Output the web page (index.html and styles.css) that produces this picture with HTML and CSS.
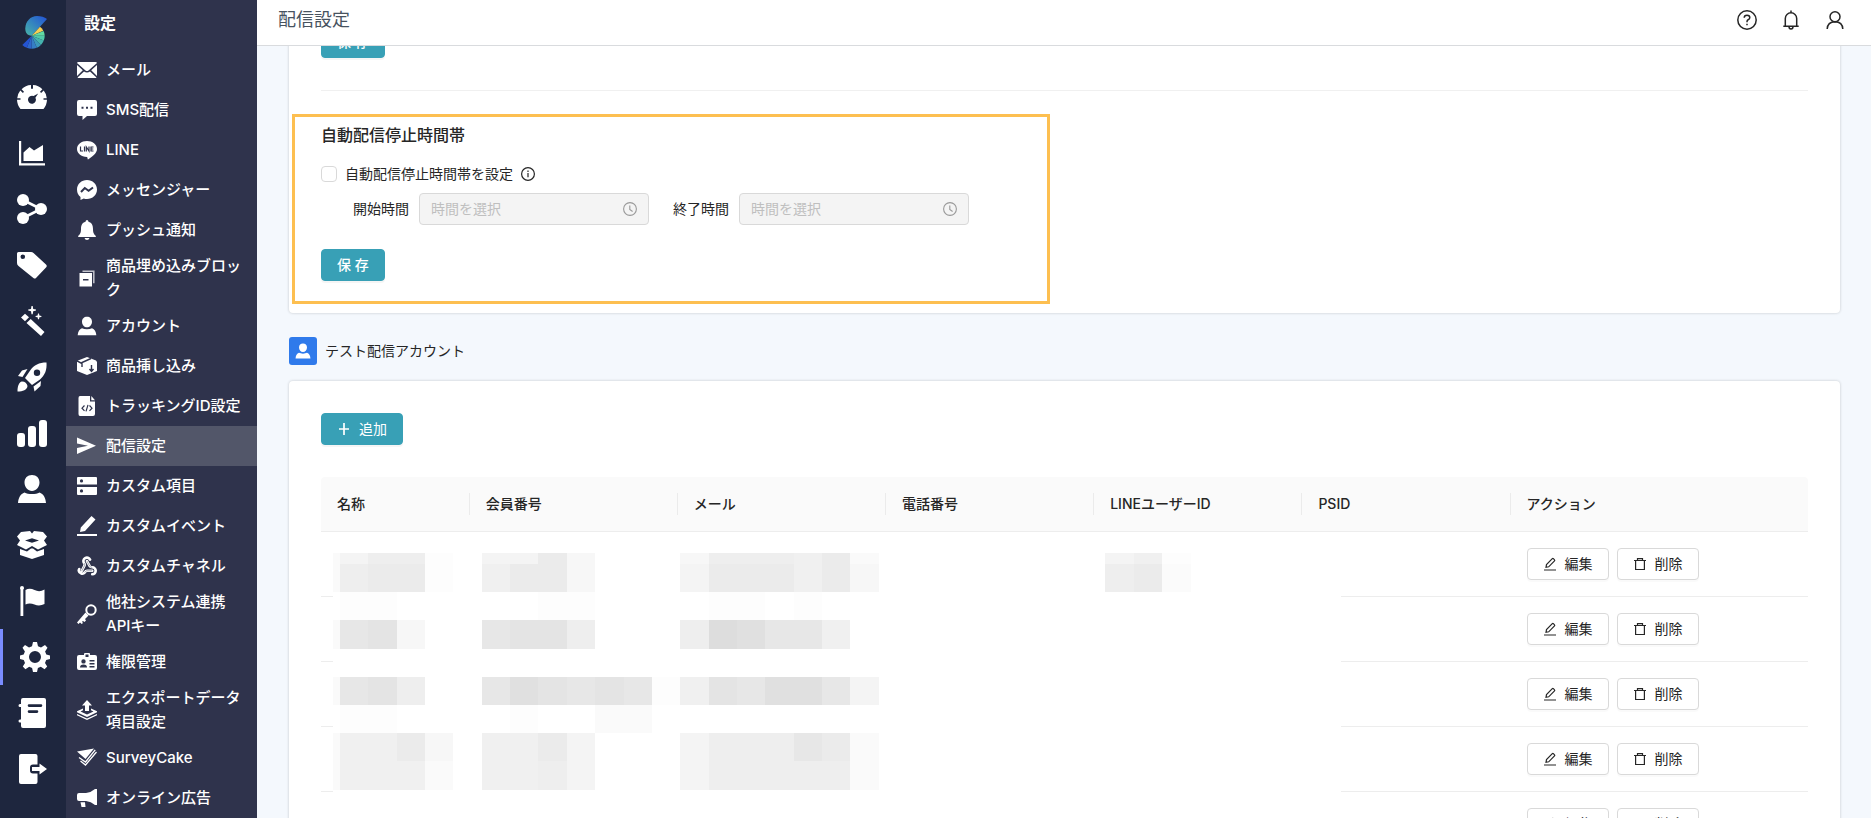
FILE: index.html
```html
<!DOCTYPE html>
<html lang="ja">
<head>
    <meta charset="UTF-8">
    <meta name="viewport" content="width=device-width, initial-scale=1.0">
    <title>配信設定</title>
    <link rel="stylesheet" href="styles.css">
</head>
<body>

    <svg class="sprite" aria-hidden="true">
        <symbol id="i-user" viewBox="0 0 30 30"><path d="M15 1c4.500 0 7.500 3 7.500 7.500S19 17 15 17 7.500 13 7.500 8.500 10.500 1 15 1zM1 29c.5-5.500 2.500-9 6.500-10.500 2 1 4.500 1.500 7.500 1.500s5.500-.5 7.500-1.500C26.500 20 28.500 23.500 29 29z"/></symbol>
        <symbol id="i-edit" viewBox="0 0 14 14"><path d="M1 13h12M3 10.300l.5-2.800L9.300 1.700a.8.8 0 0 1 1.100 0l1.100 1.100a.8.8 0 0 1 0 1.100L5.700 9.800z" fill="none" stroke="currentColor" stroke-width="1.200"/></symbol>
        <symbol id="i-trash" viewBox="0 0 14 14"><path d="M1 3.500h12M4.500 3.300V1.600h5v1.700M2.600 3.500v9h8.800v-9" fill="none" stroke="currentColor" stroke-width="1.200"/></symbol>
        <symbol id="i-clock" viewBox="0 0 14 14"><path d="M7 .6a6.400 6.400 0 1 1 0 12.800A6.400 6.400 0 0 1 7 .6zM6.800 3.500v4l2.800 2" fill="none" stroke="currentColor" stroke-width="1.100"/></symbol>
    </svg>

    <nav class="rail" aria-label="メイン">
        <a class="logo" href="#" aria-label="ホーム">
            <svg viewBox="0 0 26 34">
                <defs>
                    <linearGradient id="swoop" x1="1" y1="0" x2="0" y2="1">
                        <stop offset="0" stop-color="#2350d6"/>
                        <stop offset=".3" stop-color="#2c6fc9"/>
                        <stop offset="1" stop-color="#48b5a8"/>
                    </linearGradient>
                </defs>
                <path fill="url(#swoop)" d="M25 3 9.700 19.700C5 19.500 3.300 16.500 3.300 12.500 3.300 5.500 8.500 0 15 0c4 0 7.500 1 10 3z"/>
                <path fill="#f5cf54" d="M9.700 19.700 18 10.700q2.200 1.700 3.300 4z"/>
                <path fill="#62dba4" d="m9.700 19.700 11.800-4.700q1.300 2.200 1.200 4.700z"/>
                <path fill="#52cba9" d="M9.700 19.700h13q0 2.600-.9 4.900z"/>
                <path fill="#45b3ae" d="m9.700 19.700 12.100 4.900q-1 2.400-2.900 4.300z"/>
                <path fill="#3b97ba" d="m9.700 19.700 9.200 9.200q-1.900 1.900-4.100 2.800z"/>
                <path fill="#357ec4" d="m9.700 19.700 5.100 12q-2.500 1-5.100 1z"/>
                <path fill="#2e67cb" d="M9.700 19.700v13q-2.600 0-4.900-.9z"/>
                <path fill="#2454d2" d="M9.700 19.700 4.800 31.800Q2.200 30.800.3 28.900z"/>
            </svg>
        </a>
        <a class="rail-item" href="#" aria-label="ダッシュボード"><svg viewBox="0 0 30 30"><path fill-rule="evenodd" d="M3.500 27A15 15 0 0 1 0 17.800h3.500v-1.600H.2A14 14 0 0 1 3.300 8.500l2.600 2.400L7 9.700 4.600 7.200A14 14 0 0 1 14 3v3.800h2V3a14 14 0 0 1 9.400 4.200L23 9.700l1.100 1.200 2.600-2.400a14 14 0 0 1 3.100 7.700h-3.300v1.600H30A15 15 0 0 1 26.500 27zM21.200 11.500l-4.600 2.600a4 4 0 1 0 1.800 1.600z"/></svg></a>
        <a class="rail-item" href="#" aria-label="分析"><svg viewBox="0 0 30 30"><path d="M2 3h2.200v22.300H28v2.200H2zM6.500 14.500l6-5.500 4.500 3.500L26 7v16H6.500z"/></svg></a>
        <a class="rail-item" href="#" aria-label="シナリオ"><svg viewBox="0 0 30 30"><circle cx="6" cy="6" r="6"/><circle cx="6" cy="24" r="6"/><circle cx="24" cy="15" r="6"/><path d="m6 6 18 9L6 24" fill="none" stroke="#fff" stroke-width="2.600"/></svg></a>
        <a class="rail-item" href="#" aria-label="タグ"><svg viewBox="0 0 30 30"><path fill-rule="evenodd" d="M0 3.500Q0 2 1.500 2H14q1.500 0 2.500 1L29 14.500q1.500 1.500 0 3L19 28q-1.200 1.200-2.600 0L1.500 16Q0 15 0 13zM5.800 4.500a2.300 2.300 0 1 0 0 4.600 2.300 2.300 0 0 0 0-4.600z"/></svg></a>
        <a class="rail-item" href="#" aria-label="自動化"><svg viewBox="0 0 30 30"><path d="M4 11.500 8 7.800l4 3.500-4 4zM9.500 17l4.200-4L27.500 26 24 30zM14.500 0h1.200l.5 3 2.800.6v1l-2.800.6-.5 3h-1.200l-.5-3-2.800-.6v-1L14 3zM21 7.500h1l.4 2 2 .4v1l-2 .4-.4 2h-1l-.4-2-2-.4v-1l2-.4z"/></svg></a>
        <a class="rail-item" href="#" aria-label="キャンペーン"><svg viewBox="0 0 30 30"><path fill-rule="evenodd" d="M29.500.5C30 8 28 13 23 17.500L15 23l-7-7 5.500-8C17 3 22 .5 29.500.5zM20 7.500a3.200 3.200 0 1 0 0 6.400 3.200 3.200 0 0 0 0-6.400zM10.500 7 5.500 15 1 14l4-5.500zM24 19l-.5 5-6 5.500-1-5zM5 19.500c3 0 5 2 5.500 4.500C10 28 6 29.500.5 29.500.5 24 2 20 5 19.500z"/></svg></a>
        <a class="rail-item" href="#" aria-label="レポート"><svg viewBox="0 0 30 30"><rect x="0" y="15" width="8" height="14" rx="3"/><rect x="11" y="8" width="8" height="21" rx="3"/><rect x="22" y="2" width="8" height="27" rx="3"/></svg></a>
        <a class="rail-item" href="#" aria-label="顧客"><svg><use href="#i-user"/></svg></a>
        <a class="rail-item" href="#" aria-label="商品"><svg viewBox="0 0 30 30"><path fill-rule="evenodd" d="m4 2 9-1 2 2.500L17 1l9 1 4 4.500-3 4 3 4.500-9 4.500-6-3.500-6 3.500L0 15l3-4.500-3-4zM8 10.500l7 2.300 7-2.300-7-2.300zM3 19l7 2.500 4-3h2l4 3 7-2.500v6l-12 4-12-4z"/></svg></a>
        <a class="rail-item" href="#" aria-label="フラグ"><svg viewBox="0 0 30 30"><path d="M3 2a2 2 0 0 1 4 0q0 1-.7 1.500V30H3.500V3.500Q3 3 3 2zM8.500 4q4-2.500 9 0t10-.5V18q-5 2.500-10 .5t-9 0z"/></svg></a>
        <a class="rail-item active" href="#" aria-label="設定" aria-current="true"><svg viewBox="0 0 30 30"><path fill-rule="evenodd" d="M13 0h4l1 4.300 3 1.300L25 3l2.500 2.700-2.400 3.800 1.200 3L30 13.500v3.400l-3.800 1-1.200 3 2.200 3.600-2.600 2.700-3.800-2.400-2.900 1.200L17 30h-4l-.9-4-2.900-1.200-3.800 2.400-2.600-2.700L5 20.900l-1.200-3-3.800-1v-3.400l3.700-1 1.200-3L2.500 5.700 5 3l4 2.600 3-1.300zM15 9a6 6 0 1 0 0 12 6 6 0 0 0 0-12z"/></svg></a>
        <a class="rail-item" href="#" aria-label="ドキュメント"><svg viewBox="0 0 30 30"><path fill-rule="evenodd" d="M6 0h21q2 0 2 2v26q0 2-2 2H6q-2 0-2-2v-3.500H3a1.500 1.500 0 0 1 0-3h1V9H3a1.500 1.500 0 0 1 0-3h1V2q0-2 2-2zm6 6.300a1.300 1.300 0 0 0 0 2.600h12a1.300 1.300 0 0 0 0-2.600zm0 6a1.300 1.300 0 0 0 0 2.600h8a1.300 1.300 0 0 0 0-2.600z"/></svg></a>
        <a class="rail-item" href="#" aria-label="ログアウト"><svg viewBox="0 0 30 30"><path d="M4 0h14.500q2 0 2 2v8.500H16q-3 0-3 3v3q0 3 3 3h4.500V28q0 2-2 2H4q-2 0-2-2V2q0-2 2-2z"/><path d="M15 13h7.500V9.500L30 15l-7.500 5.500V17H15z"/></svg></a>
    </nav>

    <nav class="submenu" aria-label="設定">
        <h2 class="submenu-title">設定</h2>
        <a class="submenu-item" href="#"><svg viewBox="0 0 20 20"><path d="M1.500 2h17q1.300 0 1.500 1l-8.500 7.500q-1.500 1-3 0L0 3q.2-1 1.500-1zM0 5l5.800 5.200L0 16zM20 5l-5.800 5.200L20 16zM7 11.500q3 2.200 6 0l6.500 6q-.5.500-1.500.5H2q-1 0-1.500-.5z"/></svg><span>メール</span></a>
        <a class="submenu-item" href="#"><svg viewBox="0 0 20 20"><path fill-rule="evenodd" d="M2 0h16q2 0 2 2v12q0 2-2 2h-8l-4.500 4V16H2q-2 0-2-2V2q0-2 2-2zm2.500 6.700v2h2v-2zm4.500 0v2h2v-2zm4.500 0v2h2v-2z"/></svg><span>SMS配信</span></a>
        <a class="submenu-item" href="#"><svg viewBox="0 0 20 20"><path d="M10 1c5.500 0 10 3.300 10 8 0 4-4 7-9 10.500-.5 0-.3-2-1-2.500C4 16.700 0 13 0 9c0-4.700 4.500-8 10-8z"/><path d="M3.500 6.500v4.500H6M7.500 6.500v5M9.300 11.500V7l2.700 4V6.500M16.500 7H14v4h2.500M14 9h2.300" fill="none" stroke="#2f334c" stroke-width="1.200"/></svg><span>LINE</span></a>
        <a class="submenu-item" href="#"><svg viewBox="0 0 20 20"><path d="M10 0c5.500 0 10 4 10 9.500S15.500 19 10 19q-1.800 0-3.200-.5L3.500 20v-3Q0 14 0 9.500C0 4 4.500 0 10 0z"/><path d="m4 12 3.800-4 3.800 2.700L16 7.500" fill="none" stroke="#2f334c" stroke-width="2"/></svg><span>メッセンジャー</span></a>
        <a class="submenu-item" href="#"><svg viewBox="0 0 20 20"><path d="M10 0q1.300 0 1.500 1.700C15 2.500 16 5.500 16 9c0 4 1 5 2.800 7v1H1.200v-1C3 14 4 13 4 9c0-3.500 1-6.500 4.500-7.300Q8.700 0 10 0zM7.500 18h5q-.5 2-2.500 2t-2.500-2z"/></svg><span>プッシュ通知</span></a>
        <a class="submenu-item" href="#"><svg viewBox="0 0 20 20"><path fill-rule="evenodd" d="M2.500 5H15v13.500H2.500zM6 11v1.500h5.500V11z"/><path d="M5.500 3.300h11.300v12" fill="none" stroke="#c3c4cd" stroke-width="1.500"/></svg><span>商品埋め込みブロック</span></a>
        <a class="submenu-item" href="#"><svg><use href="#i-user"/></svg><span>アカウント</span></a>
        <a class="submenu-item" href="#"><svg viewBox="0 0 20 20"><path d="m10 1 9 3.500 1 1.500v9l-10 4-10-4V6l1-1.500z"/><path d="m14 2.500-9 4V11M0 5l5 2.500M14.500 9v6M12.500 13l2 2.500 2-2.500" fill="none" stroke="#2f334c" stroke-width="1.400"/></svg><span>商品挿し込み</span></a>
        <a class="submenu-item" href="#"><svg viewBox="0 0 20 20"><path d="M3 0h10v5.500h5V18q0 2-2 2H3q-1.500 0-1.500-2V2Q1.500 0 3 0zM14.300 0 18 4.300h-3.700z"/><path d="m7.500 9.500-2.500 2.700 2.500 2.700m5-5.400 2.500 2.700-2.500 2.700m-1.500-6-2 6.500" fill="none" stroke="#2f334c" stroke-width="1.200"/></svg><span>トラッキングID設定</span></a>
        <a class="submenu-item active" href="#" aria-current="page"><svg viewBox="0 0 20 20"><path d="m0 1.500 19 8.300L0 18v-6l11-2.200L0 7.500z"/></svg><span>配信設定</span></a>
        <a class="submenu-item" href="#"><svg viewBox="0 0 20 20"><path fill-rule="evenodd" d="M1 1h18q1 0 1 1v6.500H0V2q0-1 1-1zm3.500 2.300a1.600 1.600 0 1 0 0 3.200 1.600 1.600 0 0 0 0-3.200zM0 11h20v7q0 1-1 1H1q-1 0-1-1zm4.500 2.300a1.600 1.600 0 1 0 0 3.200 1.600 1.600 0 0 0 0-3.200z"/></svg><span>カスタム項目</span></a>
        <a class="submenu-item" href="#"><svg viewBox="0 0 20 20"><path d="M0 18h20v2H0zM3 16l.8-4.500L14.500 0 18.500 3.500 8 15z"/></svg><span>カスタムイベント</span></a>
        <a class="submenu-item" href="#"><svg viewBox="1 0 22 23"><g fill="none" stroke="#fff" stroke-width="3" stroke-linecap="round"><path d="M18 17h-6c-1.100 0-1.950.9-2.500 1.900A4 4 0 0 1 2.500 17c0-.7.2-1.400.6-2M6 17l3.100-5.800c.5-1 .1-2.200-.5-3.100a4 4 0 1 1 6.900-4M12 6l3.100 5.700c.6 1 1.800 1.300 2.900 1.300a4 4 0 0 1 0 8"/></g><g fill="none" stroke="#2f334c" stroke-width=".5"><path d="M18 17h-6c-1.100 0-1.950.9-2.500 1.900M6 17l3.100-5.800c.5-1 .1-2.200-.5-3.100M12 6l3.100 5.700c.6 1 1.800 1.300 2.900 1.300"/></g></svg><span>カスタムチャネル</span></a>
        <a class="submenu-item" href="#"><svg viewBox="0 0 20 20"><circle cx="14" cy="6" r="4.700" fill="none" stroke="#fff" stroke-width="2"/><path d="m8.500 8.500 3 3L8 15l1 1.500-1.500 1.500L6 17l-1 .8L6 19l-1.300 1L3 18.500 1.500 20 0 18.500z"/></svg><span>他社システム連携APIキー</span></a>
        <a class="submenu-item" href="#"><svg viewBox="0 0 20 20"><path fill-rule="evenodd" d="M7 3V2q0-1 1-1h4q1 0 1 1v1h5q2 0 2 2v11q0 2-2 2H2q-2 0-2-2V5q0-2 2-2zm1.500-.5V5h3V2.500zM6.500 7.200a2.200 2.200 0 1 0 0 4.400 2.200 2.200 0 0 0 0-4.400zM3 15.500h7q0-3-3.500-3T3 15.500zM12.500 8v1.500h5V8zm0 3v1.500h5V11zm0 3v1.500h5V14z"/></svg><span>権限管理</span></a>
        <a class="submenu-item" href="#"><svg viewBox="0 0 20 20"><path d="m10 0 5 5.500h-3V11H8V5.500H5zM6 8.500v1.800L3.500 11.500 10 14.500l6.500-3L14 10.300V8.500l6 2.700v1L10 17 0 12.200v-1zM0 14l10 4.500L20 14v1.300L10 20 0 15.300z"/></svg><span>エクスポートデータ項目設定</span></a>
        <a class="submenu-item" href="#"><svg viewBox="0 0 20 20"><path d="M0 3.500 17 .5 8.500 11z"/><path d="M2 9.500 8.500 14 18.200 1.800M3.500 13l5 4L19.500 4" fill="none" stroke="#fff" stroke-width="1.300"/></svg><span>SurveyCake</span></a>
        <a class="submenu-item" href="#"><svg viewBox="0 0 20 20"><path d="M2 5h7q5-.5 9-4h2v16h-2q-4-3.500-9-4H2q-2 0-2-2V7q0-2 2-2zM3.500 14.300H8L8.500 19H4.500z"/></svg><span>オンライン広告</span></a>
    </nav>

    <div class="page">
        <header class="topbar">
            <h1>配信設定</h1>
            <div class="topbar-actions">
                <button type="button" aria-label="ヘルプ"><svg viewBox="0 0 20 20"><circle cx="10" cy="10" r="9.200"/><path d="M7.200 7.800q0-2.600 2.800-2.600t2.800 2.400q0 1.500-1.700 2.200-1.100.5-1.100 1.900v.6M10 13.800v1.500"/></svg></button>
                <button type="button" aria-label="お知らせ"><svg viewBox="0 0 20 20"><path d="M2.300 16.300h15.400M4.300 16V8.500a5.700 5.700 0 0 1 11.400 0V16M10 2.800V.5M8 16.500q0 2.500 2 2.500t2-2.500"/></svg></button>
                <button type="button" aria-label="アカウント"><svg viewBox="0 0 20 20"><circle cx="10" cy="6.800" r="5"/><path d="M2.200 19q.3-7 7.800-7.200 7.500.2 7.800 7.200"/></svg></button>
            </div>
        </header>

        <main class="content">
            <div class="card card-scrolled">
                <button type="button" class="btn btn-primary btn-save">保 存</button>
                <hr>
                <section class="stop-time">
                    <h3>自動配信停止時間帯</h3>
                    <div class="check-row">
                        <input type="checkbox" id="stop-enabled">
                        <label for="stop-enabled">自動配信停止時間帯を設定</label>
                        <svg class="info" viewBox="0 0 14 14"><circle cx="7" cy="7" r="6.400"/><path d="M7 6v4.300M7 3.600V5"/></svg>
                    </div>
                    <div class="time-row">
                        <div class="time-field">
                            <label for="start">開始時間</label>
                            <div class="picker"><input type="text" id="start" placeholder="時間を選択" disabled><svg><use href="#i-clock"/></svg></div>
                        </div>
                        <div class="time-field">
                            <label for="end">終了時間</label>
                            <div class="picker"><input type="text" id="end" placeholder="時間を選択" disabled><svg><use href="#i-clock"/></svg></div>
                        </div>
                    </div>
                    <button type="button" class="btn btn-primary btn-save">保 存</button>
                </section>
            </div>

            <div class="section-head">
                <span class="section-icon"><svg><use href="#i-user"/></svg></span>
                <h2>テスト配信アカウント</h2>
            </div>

            <div class="card card-list">
                <button type="button" class="btn btn-primary btn-add"><svg viewBox="0 0 14 14"><path d="M7 1v12M2 7h10" fill="none" stroke="#fff" stroke-width="1.700"/></svg>追加</button>
                <div class="table-wrap">
                    <table>
                        <thead>
                            <tr>
                                <th class="col-name">名称</th>
                                <th>会員番号</th>
                                <th>メール</th>
                                <th>電話番号</th>
                                <th>LINEユーザーID</th>
                                <th>PSID</th>
                                <th class="col-action">アクション</th>
                            </tr>
                        </thead>
                        <tbody>
                            <tr>
                                <td colspan="6"></td>
                                <td><div class="actions"><button type="button" class="btn"><svg><use href="#i-edit"/></svg>編集</button><button type="button" class="btn"><svg><use href="#i-trash"/></svg>削除</button></div></td>
                            </tr>
                            <tr>
                                <td colspan="6"></td>
                                <td><div class="actions"><button type="button" class="btn"><svg><use href="#i-edit"/></svg>編集</button><button type="button" class="btn"><svg><use href="#i-trash"/></svg>削除</button></div></td>
                            </tr>
                            <tr>
                                <td colspan="6"></td>
                                <td><div class="actions"><button type="button" class="btn"><svg><use href="#i-edit"/></svg>編集</button><button type="button" class="btn"><svg><use href="#i-trash"/></svg>削除</button></div></td>
                            </tr>
                            <tr>
                                <td colspan="6"></td>
                                <td><div class="actions"><button type="button" class="btn"><svg><use href="#i-edit"/></svg>編集</button><button type="button" class="btn"><svg><use href="#i-trash"/></svg>削除</button></div></td>
                            </tr>
                            <tr>
                                <td colspan="6"></td>
                                <td><div class="actions"><button type="button" class="btn"><svg><use href="#i-edit"/></svg>編集</button><button type="button" class="btn"><svg><use href="#i-trash"/></svg>削除</button></div></td>
                            </tr>
                        </tbody>
                    </table>
                    <!-- mosaic over the personal data -->
                    <svg class="mosaic" viewBox="0 0 1008 265" aria-hidden="true">
                        <rect width="1008" height="265" fill="#fff"/>
                        <g transform="translate(7) scale(28.350 1)" shape-rendering="crispEdges">
                            <path fill="#fafafa" d="M-.25 0h.25v39h-.25zM-.25 67h.25v29h-.25zM-.25 124h.25v28h-.25zM-.25 180h.25v57h-.25zM9 152h2v28h-2zM18 0h1v11h-1zM18 180h1v57h-1zM3 208h1v29h-1z"/>
                            <path fill="#fdfdfd" d="M3 0h1v39h-1zM0 39h2v28h-2zM7 39h2v28h-2zM13 39h2v28h-2zM16 39h1v28h-1zM11 124h1v28h-1zM0 152h2v28h-2zM6 152h1v28h-1zM29 0h1v11h-1z"/>
                            <path fill="#fbfbfb" d="M29 11h1v28h-1z"/>
                            <path fill="#f7f7f7" d="M8 0h1v39h-1zM12 0h1v11h-1zM18 11h1v28h-1zM2 67h1v29h-1zM3 180h1v28h-1z"/>
                            <path fill="#f4f4f4" d="M0 0h1v11h-1zM5 0h2v11h-2zM12 11h1v28h-1zM27 0h1v11h-1zM18 124h1v28h-1zM8 180h1v57h-1zM12 180h1v57h-1z"/>
                            <path fill="#f0f0f0" d="M28 0h1v11h-1zM5 11h1v28h-1zM16 0h1v39h-1zM17 67h1v29h-1zM12 124h1v28h-1zM0 180h2v28h-2zM0 208h3v29h-3zM5 180h2v57h-2z"/>
                            <path fill="#eee" d="M1 0h2v11h-2zM13 0h3v11h-3zM0 11h1v28h-1zM27 11h1v28h-1zM8 67h1v29h-1zM12 67h1v29h-1zM2 124h1v28h-1zM13 180h3v57h-3zM16 208h2v29h-2zM7 208h1v29h-1z"/>
                            <path fill="#ebebeb" d="M7 0h1v39h-1zM17 0h1v39h-1zM1 11h2v28h-2zM6 11h1v28h-1zM13 11h3v28h-3zM28 11h1v28h-1zM2 180h1v28h-1zM7 180h1v28h-1zM17 180h1v28h-1z"/>
                            <path fill="#e7e7e7" d="M0 67h1v29h-1zM5 67h1v29h-1zM15 67h2v29h-2zM0 124h1v28h-1zM5 124h1v28h-1zM8 124h1v28h-1zM10 124h1v28h-1zM14 124h1v28h-1zM17 124h1v28h-1zM16 180h1v28h-1z"/>
                            <path fill="#e4e4e4" d="M1 67h1v29h-1zM6 67h2v29h-2zM1 124h1v28h-1zM7 124h1v28h-1zM9 124h1v28h-1zM13 124h1v28h-1z"/>
                            <path fill="#e0e0e0" d="M14 67h1v29h-1zM6 124h1v28h-1zM15 124h2v28h-2z"/>
                            <path fill="#ddd" d="M13 67h1v29h-1z"/>
                        </g>
                    </svg>
                </div>
            </div>
        </main>
    </div>

</body>
</html>
```
FILE: styles.css
```css
:root {
    --rail: #1e263e;
    --menu: #2f334c;
    --primary: #38a0b6;
    --text: #262626;
    --line: #ededed;
}

* { box-sizing: border-box; }

body {
    margin: 0;
    display: flex;
    height: 100vh;
    overflow: hidden;
    background: #f4f8fd;
    color: var(--text);
    font-family: Inter, "Noto Sans CJK JP", sans-serif;
    font-size: 14px;
    line-height: 22px;
}

h1, h2, h3 { margin: 0; }
button, input { font: inherit; color: inherit; }
svg { display: block; flex: none; fill: currentColor; }
.sprite { position: absolute; width: 0; height: 0; }

/* left icon rail */
.rail {
    flex: none;
    width: 66px;
    background: var(--rail);
    color: #fff;
}
.logo { display: block; height: 69px; padding: 16px 0 0 22px; }
.logo svg { width: 26px; height: 34px; }
.rail-item {
    display: flex;
    align-items: center;
    height: 56px;
    padding-left: 17px;
    color: #fff;
}
.rail-item svg { width: 30px; height: 30px; }
.rail-item.active { border-left: 3px solid #7a8cff; }

/* settings menu */
.submenu {
    flex: none;
    width: 191px;
    background: var(--menu);
    color: #fff;
}
.submenu-title {
    height: 50px;
    padding-left: 18px;
    font-size: 16px;
    font-weight: 700;
    line-height: 46px;
}
.submenu-item {
    display: flex;
    align-items: center;
    gap: 9px;
    min-height: 40px;
    padding: 4px 12px 4px 11px;
    color: #fff;
    font-size: 15px;
    font-weight: 500;
    line-height: 24px;
    text-decoration: none;
}
.submenu-item svg { width: 20px; height: 20px; }
.submenu-item.active { background: #525669; }

.page {
    flex: 1;
    min-width: 0;
    display: flex;
    flex-direction: column;
}

.topbar {
    position: relative;
    z-index: 1;
    flex: none;
    display: flex;
    align-items: center;
    justify-content: space-between;
    height: 46px;
    padding: 0 26px 6px 21px;
    background: #fff;
    border-bottom: 1px solid #d9dbde;
}
.topbar h1 { color: #48535f; font-size: 18px; font-weight: 400; }
.topbar-actions { display: flex; gap: 24px; }
.topbar-actions button { padding: 0; border: 0; background: none; }
.topbar-actions svg {
    width: 20px; height: 20px;
    fill: none;
    stroke: var(--text);
    stroke-width: 1.5;
}

.content { flex: 1; min-height: 0; padding: 0 31px 0 32px; overflow: hidden; }

.card {
    background: #fff;
    border-radius: 4px;
    box-shadow: 0 0 3px rgba(0, 0, 0, 0.2);
}
.card-scrolled { margin-top: -20px; padding: 0 32px 9px; }
.card-list { padding: 32px; }
.card hr { margin: 32px 0 23px; border: 0; border-top: 1px solid #f0f0f0; }

.btn {
    display: inline-flex;
    align-items: center;
    gap: 8px;
    height: 32px;
    padding: 0 15px;
    border: 1px solid #d9d9d9;
    border-radius: 4px;
    background: #fff;
    box-shadow: 0 2px 0 rgba(0, 0, 0, 0.02);
}
.btn svg { width: 14px; height: 14px; }
.btn-primary {
    background: var(--primary);
    border-color: var(--primary);
    color: #fff;
    box-shadow: 0 2px 0 rgba(0, 0, 0, 0.04);
}
.btn-save { display: flex; font-weight: 500; }

/* auto stop hours */
.stop-time {
    width: 758px;
    margin-left: -29px;
    padding: 6px 26px 20px;
    border: 3px solid #fdbf50;
}
.stop-time h3 { font-size: 16px; font-weight: 500; line-height: 24px; }
.check-row { display: flex; align-items: center; gap: 8px; height: 22px; margin: 16px 0 8px; }
.check-row input {
    appearance: none;
    width: 16px; height: 16px;
    margin: 0;
    border: 1px solid #d9d9d9;
    border-radius: 4px;
    background: #fff;
}
.check-row .info { width: 14px; height: 14px; fill: none; stroke: var(--text); stroke-width: 1.2; }
.time-row { display: flex; gap: 24px; margin: 0 0 24px 32px; }
.time-field { display: flex; align-items: center; gap: 10px; }
.picker {
    display: flex;
    align-items: center;
    width: 230px;
    height: 32px;
    padding: 0 11px;
    border: 1px solid #d9d9d9;
    border-radius: 4px;
    background: #f4f4f4;
    color: #999;
}
.picker input { flex: 1; min-width: 0; padding: 0; border: 0; background: none; }
.picker input::placeholder { color: #bfbfbf; }
.picker svg { width: 14px; height: 14px; }

.section-head { display: flex; align-items: center; gap: 8px; margin: 24px 0 16px; }
.section-head h2 { font-size: 14px; font-weight: 400; }
.section-icon { padding: 6px; border-radius: 3px; background: #2f7aeb; color: #fff; }
.section-icon svg { width: 16px; height: 16px; }

/* account list */
.table-wrap { position: relative; margin-top: 32px; }
table { width: 100%; border-collapse: separate; border-spacing: 0; table-layout: fixed; }
th, td { padding: 16px; border-bottom: 1px solid var(--line); text-align: left; }
th { position: relative; width: 14%; background: #fafafa; font-weight: 500; }
th:first-child { border-top-left-radius: 4px; }
th:last-child { border-top-right-radius: 4px; }
th:not(:last-child)::before {
    content: "";
    position: absolute;
    top: 16px; right: 0;
    width: 1px; height: 22px;
    background: #ebebeb;
}
th.col-name { width: 10%; }
th.col-action { width: 20%; }
.actions { display: flex; gap: 8px; }

.mosaic { position: absolute; top: 76px; left: 12px; width: 1008px; height: 265px; }
```
